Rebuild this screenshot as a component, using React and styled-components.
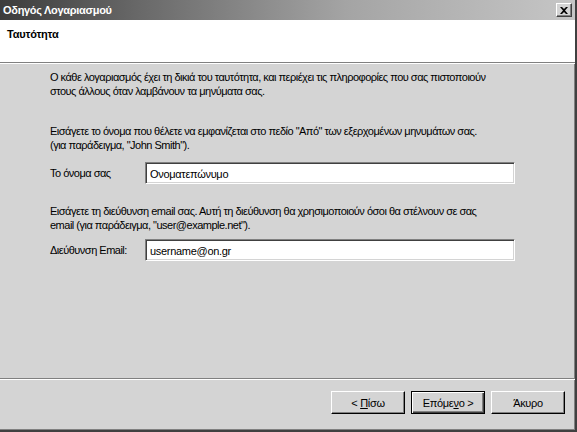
import styled, { createGlobalStyle } from 'styled-components';

const GlobalStyle = createGlobalStyle`
  html, body {
    margin: 0;
    padding: 0;
    background: #d4d4d4;
  }
  * {
    box-sizing: border-box;
  }
`;

const Window = styled.div`
  display: flex;
  flex-direction: column;
  width: 577px;
  height: 432px;
  background: #d4d4d4;
  font-family: "Liberation Sans", Arial, sans-serif;
  font-size: 11px;
  color: #000;
  border-right: 2px solid #404040;
  border-bottom: 2px solid #404040;
  box-shadow: inset -1px -1px 0 #808080;
`;

const TitleBar = styled.div`
  display: flex;
  align-items: center;
  justify-content: space-between;
  height: 20px;
  padding: 0 3px 0 3px;
  background: linear-gradient(to right, #3c3c3c 0%, #6a6a6a 25%, #a4a4a4 60%, #c6c6c6 100%);
`;

const Title = styled.span`
  color: #fff;
  font-weight: bold;
  font-size: 11px;
  letter-spacing: -0.3px;
`;

const CloseButton = styled.div`
  display: flex;
  align-items: center;
  justify-content: center;
  width: 16px;
  height: 14px;
  background: #d4d4d4;
  border-top: 1px solid #fff;
  border-left: 1px solid #fff;
  border-right: 1px solid #404040;
  border-bottom: 1px solid #404040;
  box-shadow: inset -1px -1px 0 #808080;
`;

const Header = styled.div`
  height: 43px;
  background: #fff;
  padding: 8px 7px;
  border-bottom: 1px solid #808080;
  box-shadow: 0 1px 0 #fff;
`;

const HeaderTitle = styled.div`
  font-weight: bold;
  font-size: 11px;
  letter-spacing: -0.2px;
`;

const Body = styled.div`
  flex: 1;
  display: flex;
  flex-direction: column;
  padding: 7px 10px 0 50px;
  letter-spacing: -0.5px;
  white-space: nowrap;
`;

const Paragraph = styled.p`
  margin: 0 0 ${({ gap }) => gap}px 0;
  line-height: 14px;
`;

const FieldRow = styled.div`
  display: flex;
  align-items: center;
  margin-bottom: ${({ gap }) => gap}px;
`;

const Label = styled.label`
  width: 95px;
  flex-shrink: 0;
`;

const TextInput = styled.input`
  width: 370px;
  height: 22px;
  padding: 1px 4px 0;
  font-family: "Liberation Sans", Arial, sans-serif;
  font-size: 11px;
  letter-spacing: -0.3px;
  color: #000;
  background: #fff;
  border-top: 1px solid #808080;
  border-left: 1px solid #808080;
  border-right: 1px solid #fff;
  border-bottom: 1px solid #fff;
  box-shadow: inset 1px 1px 0 #404040, inset -1px -1px 0 #d4d4d4;
  outline: none;
`;

const Footer = styled.div`
  display: flex;
  flex-direction: column;
  height: 52px;
  border-top: 1px solid #808080;
  box-shadow: inset 0 1px 0 #fff;
`;

const ButtonBar = styled.div`
  display: flex;
  justify-content: flex-end;
  gap: 6px;
  padding: 12px 10px 0 0;
`;

const Button = styled.button`
  width: 74px;
  height: 23px;
  padding: 0;
  font-family: "Liberation Sans", Arial, sans-serif;
  font-size: 11px;
  letter-spacing: -0.3px;
  color: #000;
  background: #d4d4d4;
  border-top: 1px solid ${({ primary }) => (primary ? '#000' : '#fff')};
  border-left: 1px solid ${({ primary }) => (primary ? '#000' : '#fff')};
  border-right: 1px solid #000;
  border-bottom: 1px solid #000;
  box-shadow: ${({ primary }) =>
    primary
      ? 'inset 1px 1px 0 #fff, inset -1px -1px 0 #404040, inset -2px -2px 0 #808080'
      : 'inset -1px -1px 0 #808080'};
`;

const Key = styled.span`
  text-decoration: underline;
`;

export default function App() {
  return (
    <>
      <GlobalStyle />
      <Window>
        <TitleBar>
          <Title>Οδηγός Λογαριασμού</Title>
          <CloseButton>
            <svg width="8" height="7" viewBox="0 0 8 7">
              <path d="M0 0h2l2 2 2-2h2L5 3.5 8 7H6L4 5 2 7H0l3-3.5z" fill="#000" />
            </svg>
          </CloseButton>
        </TitleBar>
        <Header>
          <HeaderTitle>Ταυτότητα</HeaderTitle>
        </Header>
        <Body>
          <Paragraph gap={26}>
            Ο κάθε λογαριασμός έχει τη δικιά του ταυτότητα, και περιέχει τις πληροφορίες που σας πιστοποιούν
            <br />
            στους άλλους όταν λαμβάνουν τα μηνύματα σας.
          </Paragraph>
          <Paragraph gap={10}>
            Εισάγετε το όνομα που θέλετε να εμφανίζεται στο πεδίο "Από" των εξερχομένων μηνυμάτων σας.
            <br />
            (για παράδειγμα, "John Smith").
          </Paragraph>
          <FieldRow gap={20}>
            <Label>Το όνομα σας</Label>
            <TextInput defaultValue="Ονοματεπώνυμο" />
          </FieldRow>
          <Paragraph gap={7}>
            Εισάγετε τη διεύθυνση email σας. Αυτή τη διεύθυνση θα χρησιμοποιούν όσοι θα στέλνουν σε σας
            <br />
            email (για παράδειγμα, "user@example.net").
          </Paragraph>
          <FieldRow gap={0}>
            <Label>Διεύθυνση Email:</Label>
            <TextInput defaultValue="username@on.gr" />
          </FieldRow>
        </Body>
        <Footer>
          <ButtonBar>
            <Button>&lt; <Key>Π</Key>ίσω</Button>
            <Button primary>Επόμε<Key>ν</Key>ο &gt;</Button>
            <Button>Άκυρο</Button>
          </ButtonBar>
        </Footer>
      </Window>
    </>
  );
}
